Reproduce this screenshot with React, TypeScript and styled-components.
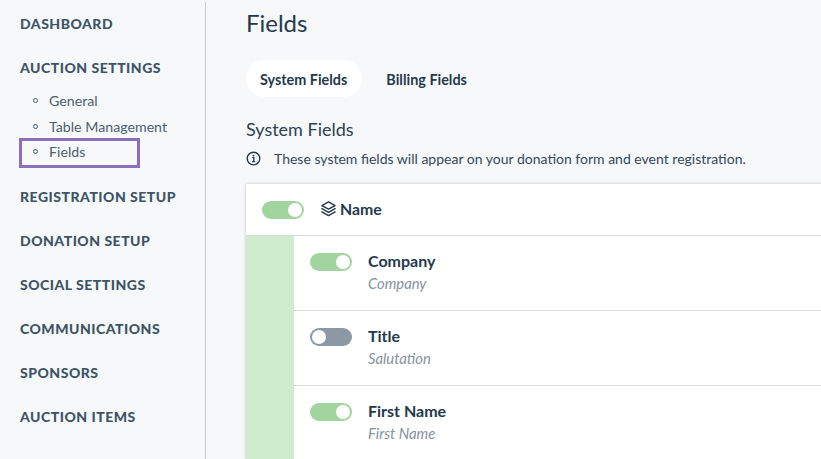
import React, { FC } from 'react';
import styled, { createGlobalStyle } from 'styled-components';

const GlobalStyle = createGlobalStyle`
    html, body {
        margin: 0;
        height: 100%;
        overflow: hidden;
        background: #f7f8fa;
        font-family: 'Lato', 'Open Sans', sans-serif;
    }
`;

const Page = styled.div`
    display: flex;
    width: 821px;
    height: 459px;
    overflow: hidden;
`;

const Sidebar = styled.nav`
    box-sizing: border-box;
    flex: 0 0 206px;
    height: 457px;
    margin-top: 2px;
    padding: 13px 0 0 20px;
    border-right: 1px solid #c9ccd0;
`;

const SectionTitle = styled.div`
    height: 18px;
    line-height: 18px;
    margin-bottom: 26px;
    font-size: 14px;
    font-weight: 900;
    letter-spacing: 0.5px;
    color: #3d5466;
    white-space: nowrap;
`;

const SubList = styled.ul`
    list-style: none;
    margin: -15px 0 20px;
    padding: 0;
`;

const SubItem = styled.li<{ $active?: boolean }>`
    box-sizing: border-box;
    display: flex;
    align-items: center;
    gap: 11px;
    width: 121px;
    height: ${(p) => (p.$active ? 30 : 25.5)}px;
    margin: ${(p) => (p.$active ? '-1px 0 0 -1px' : '0')};
    padding: ${(p) => (p.$active ? '0 0 4px 11px' : '0 0 0 13px')};
    border: ${(p) => (p.$active ? '3px solid #8b6fbd' : 'none')};
    font-size: 14.2px;
    color: #4a5f70;
    white-space: nowrap;

    &::before {
        content: '';
        box-sizing: border-box;
        flex: none;
        width: 5px;
        height: 5px;
        border: 1px solid #4a5f70;
        border-radius: 50%;
    }
`;

const Main = styled.main`
    flex: 1;
    min-width: 0;
    padding: 10px 0 0 40px;
`;

const PageTitle = styled.h1`
    margin: 0 0 24px;
    font-size: 24px;
    line-height: 26px;
    font-weight: 400;
    color: #24394a;
`;

const Tabs = styled.div`
    display: flex;
    gap: 24px;
    margin-bottom: 22px;
`;

const Tab = styled.div<{ $active?: boolean }>`
    height: 37px;
    line-height: 39px;
    padding: ${(p) => (p.$active ? '0 15px 0 14px' : '0')};
    border-radius: 19px;
    background: ${(p) => (p.$active ? '#ffffff' : 'transparent')};
    font-size: 14.4px;
    font-weight: 700;
    color: #24394a;
`;

const SectionHeading = styled.h2`
    margin: 0 0 10px;
    font-size: 18px;
    line-height: 20px;
    font-weight: 400;
    color: #2c4152;
`;

const InfoRow = styled.div`
    display: flex;
    align-items: center;
    gap: 13px;
    height: 18px;
    margin-bottom: 17px;
    font-size: 14px;
    color: #33495a;
    white-space: nowrap;
`;

const Card = styled.section`
    width: 620px;
    background: #ffffff;
    box-shadow: 0 0 3px rgba(60, 70, 90, 0.3);
`;

const ParentRow = styled.div`
    display: flex;
    align-items: center;
    height: 51px;
    padding-left: 16px;
    border-bottom: 1px solid #d6dbdd;
`;

const ParentName = styled.span`
    display: flex;
    align-items: center;
    gap: 3px;
    margin: -2px 0 0 16px;
    font-size: 15.8px;
    font-weight: 700;
    color: #24394a;
`;

const Children = styled.div`
    border-left: 48px solid #d0ecce;
`;

const FieldRow = styled.div`
    box-sizing: border-box;
    display: flex;
    height: 75px;
    padding: 17px 0 0 16px;
    border-bottom: 1px solid #d6dbdd;
`;

const FieldText = styled.div`
    margin: -1px 0 0 16px;
`;

const FieldName = styled.div`
    font-size: 16px;
    line-height: 18px;
    font-weight: 700;
    color: #24394a;
`;

const FieldHint = styled.div`
    margin-top: 5px;
    font-size: 14.8px;
    line-height: 17px;
    font-style: italic;
    color: #8593a0;
`;

const Toggle = styled.span<{ $on: boolean }>`
    box-sizing: border-box;
    display: flex;
    flex: none;
    justify-content: ${(p) => (p.$on ? 'flex-end' : 'flex-start')};
    align-items: center;
    width: 42px;
    height: 18px;
    padding: 2px;
    border-radius: 9px;
    background: ${(p) => (p.$on ? '#a2d49f' : '#8c99a4')};

    &::after {
        content: '';
        width: 14px;
        height: 14px;
        border-radius: 50%;
        background: #ffffff;
    }
`;

const InfoIcon: FC = () => (
    <svg width="15" height="15" viewBox="0 0 14 14" fill="none">
        <circle cx="7" cy="7" r="5.9" stroke="#24394a" strokeWidth="1.3" />
        <circle cx="7" cy="4.3" r="0.9" fill="#24394a" />
        <path d="M5.8 6.2H7.3V9.9M5.7 10H8.6" stroke="#24394a" strokeWidth="1.2" />
    </svg>
);

const LayersIcon: FC = () => (
    <svg width="17" height="17" viewBox="0 0 16 16" fill="none" stroke="#24394a" strokeWidth="1.35" strokeLinejoin="round">
        <path d="M8 1.8L14.2 5.2L8 8.6L1.8 5.2Z" />
        <path d="M2.4 7.8L1.8 8.2L8 11.6L14.2 8.2L13.6 7.8" />
        <path d="M2.4 10.8L1.8 11.2L8 14.6L14.2 11.2L13.6 10.8" />
    </svg>
);

const fields = [
    { name: 'Company', hint: 'Company', on: true },
    { name: 'Title', hint: 'Salutation', on: false },
    { name: 'First Name', hint: 'First Name', on: true },
];

export default function App() {
    return (
        <>
            <GlobalStyle />
            <Page>
                <Sidebar>
                    <SectionTitle>DASHBOARD</SectionTitle>
                    <SectionTitle>AUCTION SETTINGS</SectionTitle>
                    <SubList>
                        <SubItem>General</SubItem>
                        <SubItem>Table Management</SubItem>
                        <SubItem $active>Fields</SubItem>
                    </SubList>
                    <SectionTitle>REGISTRATION SETUP</SectionTitle>
                    <SectionTitle>DONATION SETUP</SectionTitle>
                    <SectionTitle>SOCIAL SETTINGS</SectionTitle>
                    <SectionTitle>COMMUNICATIONS</SectionTitle>
                    <SectionTitle>SPONSORS</SectionTitle>
                    <SectionTitle>AUCTION ITEMS</SectionTitle>
                </Sidebar>
                <Main>
                    <PageTitle>Fields</PageTitle>
                    <Tabs>
                        <Tab $active>System Fields</Tab>
                        <Tab>Billing Fields</Tab>
                    </Tabs>
                    <SectionHeading>System Fields</SectionHeading>
                    <InfoRow>
                        <InfoIcon />
                        These system fields will appear on your donation form and event registration.
                    </InfoRow>
                    <Card>
                        <ParentRow>
                            <Toggle $on />
                            <ParentName>
                                <LayersIcon />
                                Name
                            </ParentName>
                        </ParentRow>
                        <Children>
                            {fields.map((field) => (
                                <FieldRow key={field.name}>
                                    <Toggle $on={field.on} />
                                    <FieldText>
                                        <FieldName>{field.name}</FieldName>
                                        <FieldHint>{field.hint}</FieldHint>
                                    </FieldText>
                                </FieldRow>
                            ))}
                        </Children>
                    </Card>
                </Main>
            </Page>
        </>
    );
}
